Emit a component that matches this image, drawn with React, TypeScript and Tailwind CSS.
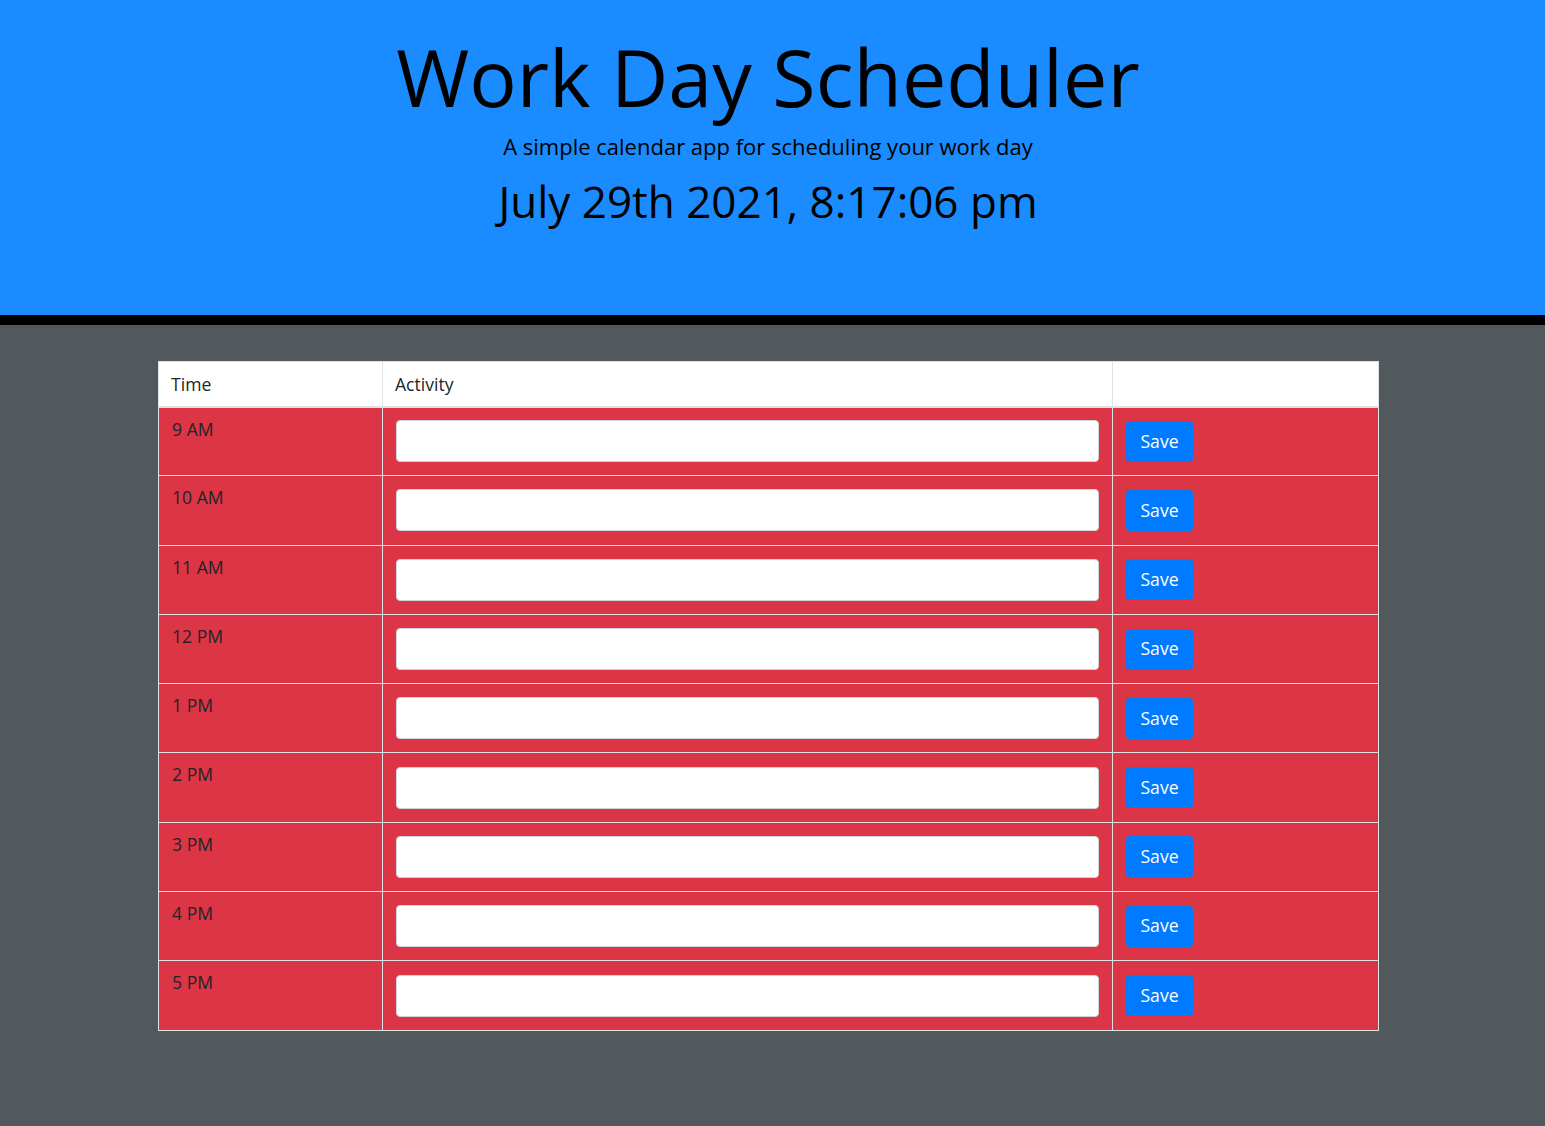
import React from "react";

const hours = ["9 AM", "10 AM", "11 AM", "12 PM", "1 PM", "2 PM", "3 PM", "4 PM", "5 PM"];

export default function App() {
  return (
    <div className="min-h-[1126px] bg-[#52595d]" style={{ fontFamily: '"Open Sans", sans-serif' }}>
      <header className="h-[325px] bg-[#1a8cff] border-b-[10px] border-black text-center text-black pr-[9px]">
        <h1 className="pt-[30px] text-[79px] leading-[1.2] font-normal">Work Day Scheduler</h1>
        <p className="mt-[5px] text-[22px] leading-[1.5] font-normal">A simple calendar app for scheduling your work day</p>
        <p className="mt-[12px] text-[44px] leading-[1.2] font-normal">July 29th 2021, 8:17:06 pm</p>
      </header>
      <div className="pt-[36px] px-[158px]">
        <table className="w-[1221px] border-collapse text-[17.6px] text-[#212529]">
          <thead>
            <tr className="bg-white h-[45px]">
              <th className="w-[224px] border border-[#dee2e6] border-b-2 px-[12px] text-left font-normal align-middle">Time</th>
              <th className="w-[730px] border border-[#dee2e6] border-b-2 px-[12px] text-left font-normal align-middle">Activity</th>
              <th className="border border-[#dee2e6] border-b-2 px-[12px]"></th>
            </tr>
          </thead>
          <tbody>
            {hours.map((h) => (
              <tr key={h} className="bg-[#dc3545] h-[69.3px]">
                <td className="border border-[#dee2e6] px-[13px] pt-[9px] align-top leading-6">{h}</td>
                <td className="border border-[#dee2e6] px-[13px] align-middle">
                  <input
                    type="text"
                    className="block w-full h-[42px] rounded-[4px] bg-white border border-[#ced4da] px-3 outline-none"
                  />
                </td>
                <td className="border border-[#dee2e6] px-[13px] align-middle">
                  <button className="h-[41px] w-[67px] rounded-[4px] bg-[#007bff] text-white text-[17.6px] leading-none">Save</button>
                </td>
              </tr>
            ))}
          </tbody>
        </table>
      </div>
    </div>
  );
}
